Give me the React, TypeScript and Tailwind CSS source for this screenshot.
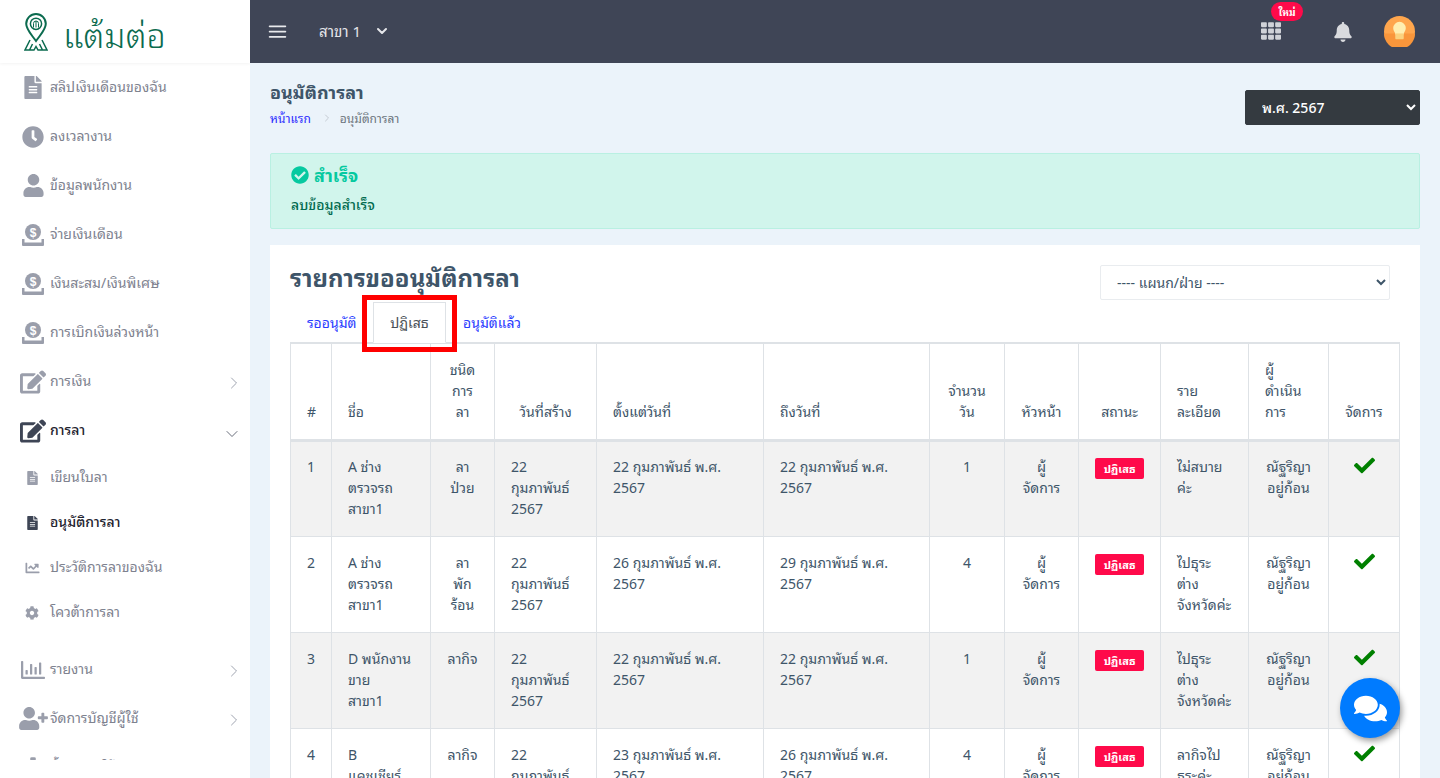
import React from "react";
import { FaFileAlt, FaClock, FaUser, FaEdit, FaUserPlus, FaCheck, FaCheckCircle, FaBell, FaCog, FaChartLine, FaComments, FaTh, FaRegChartBar } from "react-icons/fa";
import { FiChevronRight, FiChevronDown, FiMenu } from "react-icons/fi";

function Money({ className = "" }: { className?: string }) {
  return (
    <svg viewBox="0 0 24 24" className={className} fill="currentColor">
      <path d="M12 1a8 8 0 1 1 0 16a8 8 0 0 1 0-16z" />
      <text x="12" y="13.5" textAnchor="middle" fontSize="12" fontWeight="700" fill="#fff" fontFamily="Liberation Sans, sans-serif">$</text>
      <path d="M1 16h2.5v3.5h17V16H23v6a1 1 0 0 1-1 1H2a1 1 0 0 1-1-1z" />
    </svg>
  );
}

function Logo() {
  return (
    <svg viewBox="0 0 24 38" className="w-[24px] h-[38px]" fill="none" stroke="#0b6b4f" strokeWidth="2">
      <path d="M12 28C7 21 2.200 16.500 2.200 10.800a9.800 9.800 0 0 1 19.600 0C21.800 16.500 17 21 12 28z" />
      <circle cx="12" cy="10.800" r="5.600" strokeWidth="1.500" />
      <path d="M9.500 14.500V10.500a2.500 2.500 0 0 1 5 0v4M12 8v6.500" strokeWidth="1" />
      <path d="M6 27L1 37h9l2-3.500 2 3.500h9L18 27M5.500 37l3-6M18.500 37l-3-6" strokeWidth="1.500" />
    </svg>
  );
}

type Item = { label: string; icon: React.ReactNode; chevron?: "r" | "d"; active?: boolean };
const cls = "text-[#9a9eab]";
const items: Item[] = [
  { label: "สลิปเงินเดือนของฉัน", icon: <FaFileAlt className="w-[18px] h-[23px]" /> },
  { label: "ลงเวลางาน", icon: <FaClock className="w-[22px] h-[22px]" /> },
  { label: "ข้อมูลพนักงาน", icon: <FaUser className="w-[23px] h-[23px]" /> },
  { label: "จ่ายเงินเดือน", icon: <Money className="w-[24px] h-[24px]" /> },
  { label: "เงินสะสม/เงินพิเศษ", icon: <Money className="w-[24px] h-[24px]" /> },
  { label: "การเบิกเงินล่วงหน้า", icon: <Money className="w-[24px] h-[24px]" /> },
  { label: "การเงิน", icon: <FaEdit className="w-[26px] h-[24px]" />, chevron: "r" },
  { label: "การลา", icon: <FaEdit className="w-[26px] h-[24px]" />, chevron: "d", active: true },
];
const subs = [
  { label: "เขียนใบลา", icon: <FaFileAlt className="w-[11px] h-[14px]" /> },
  { label: "อนุมัติการลา", icon: <FaFileAlt className="w-[11px] h-[14px]" />, active: true },
  { label: "ประวัติการลาของฉัน", icon: <FaChartLine className="w-[15px] h-[14px]" /> },
  { label: "โควต้าการลา", icon: <FaCog className="w-[14px] h-[14px]" /> },
];
const items2: Item[] = [
  { label: "รายงาน", icon: <FaRegChartBar className="w-[24px] h-[24px]" />, chevron: "r" },
  { label: "จัดการบัญชีผู้ใช้", icon: <FaUserPlus className="w-[29px] h-[23px]" />, chevron: "r" },
  { label: "ตั้งค่าการใช้งานระบบ", icon: <FaCog className="w-[22px] h-[22px]" />, chevron: "r" },
];

function MenuRow({ it }: { it: Item }) {
  return (
    <div className={`h-[49px] flex items-center ${it.active ? "text-[#3e4555] font-medium" : cls}`}>
      <div className="w-[50px] pl-[18px] flex justify-center shrink-0 pr-[2px]">{it.icon}</div>
      <span className={`text-[14px] flex-1 pb-[4px] ${it.active ? "text-[#1f2430]" : "text-[#7e828f]"}`}>{it.label}</span>
      {it.chevron === "r" && <FiChevronRight strokeWidth={1} className="w-[20px] h-[20px] mr-[6px] mt-[3px] text-[#8b92a0]" />}
      {it.chevron === "d" && <FiChevronDown strokeWidth={1} className="w-[20px] h-[20px] mr-[8px] mt-[6px] text-[#4a5060]" />}
    </div>
  );
}

function Sidebar() {
  return (
    <aside className="w-[250px] shrink-0 bg-white flex flex-col h-[760px] overflow-hidden relative">
      <div className="h-[63px] shrink-0 flex items-center pl-[24px] gap-[15px] shadow-[0_1px_3px_rgba(0,0,0,0.05)] relative z-10">
        <Logo />
        <span className="text-[34px] leading-none text-[#0b6b4f] font-light pt-[2px]">แต้มต่อ</span>
      </div>
      <nav>
        {items.map((it) => <MenuRow key={it.label} it={it} />)}
        {subs.map((s) => (
          <div key={s.label} className={`h-[45px] flex items-center ${s.active ? "text-[#3e4555]" : cls}`}>
            <div className="w-[50px] pl-[14px] flex justify-center shrink-0">{s.icon}</div>
            <span className={`text-[14px] pb-[4px] ${s.active ? "text-[#1f2430] font-medium" : "text-[#7e828f]"}`}>{s.label}</span>
          </div>
        ))}
        <div className="h-[10px]" />
        {items2.map((it) => <MenuRow key={it.label} it={it} />)}
      </nav>
    </aside>
  );
}

type Row = { n: string; name: string[]; type: string[]; created: string[]; from: string[]; to: string[]; days: string; reason: string[] };
const rows: Row[] = [
  { n: "1", name: ["A ช่าง", "ตรวจรถ", "สาขา1"], type: ["ลา", "ป่วย"], created: ["22", "กุมภาพันธ์", "2567"], from: ["22 กุมภาพันธ์ พ.ศ.", "2567"], to: ["22 กุมภาพันธ์ พ.ศ.", "2567"], days: "1", reason: ["ไม่สบาย", "ค่ะ"] },
  { n: "2", name: ["A ช่าง", "ตรวจรถ", "สาขา1"], type: ["ลา", "พัก", "ร้อน"], created: ["22", "กุมภาพันธ์", "2567"], from: ["26 กุมภาพันธ์ พ.ศ.", "2567"], to: ["29 กุมภาพันธ์ พ.ศ.", "2567"], days: "4", reason: ["ไปธุระ", "ต่าง", "จังหวัดค่ะ"] },
  { n: "3", name: ["D พนักงาน", "ขาย", "สาขา1"], type: ["ลากิจ"], created: ["22", "กุมภาพันธ์", "2567"], from: ["22 กุมภาพันธ์ พ.ศ.", "2567"], to: ["22 กุมภาพันธ์ พ.ศ.", "2567"], days: "1", reason: ["ไปธุระ", "ต่าง", "จังหวัดค่ะ"] },
  { n: "4", name: ["B", "แคชเชียร์", "สาขา1"], type: ["ลากิจ"], created: ["22", "กุมภาพันธ์", "2567"], from: ["23 กุมภาพันธ์ พ.ศ.", "2567"], to: ["26 กุมภาพันธ์ พ.ศ.", "2567"], days: "4", reason: ["ลากิจไป", "ธุระค่ะ"] },
];

function Lines({ l }: { l: string[] }) {
  return <>{l.map((x, i) => <div key={i} className="whitespace-nowrap">{x}</div>)}</>;
}

const widths = ["w-[41px]", "w-[99px]", "w-[64px]", "w-[102px]", "w-[167px]", "w-[166px]", "w-[75px]", "w-[74px]", "w-[82px]", "w-[88px]", "w-[80px]", "w-[71px]"];
const headers: { l: string[]; left?: boolean }[] = [
  { l: ["#"] }, { l: ["ชื่อ"], left: true }, { l: ["ชนิด", "การ", "ลา"] }, { l: ["วันที่สร้าง"] },
  { l: ["ตั้งแต่วันที่"], left: true }, { l: ["ถึงวันที่"], left: true }, { l: ["จำนวน", "วัน"] }, { l: ["หัวหน้า"] },
  { l: ["สถานะ"] }, { l: ["ราย", "ละเอียด"], left: true }, { l: ["ผู้", "ดำเนิน", "การ"], left: true }, { l: ["จัดการ"] },
];

function LeaveTable() {
  return (
    <table className="table-fixed border-collapse w-[1109px] text-[14px] leading-[21px] text-[#3e5569]">
      <colgroup>{widths.map((w, i) => <col key={i} className={w} />)}</colgroup>
      <thead>
        <tr className="border-t-2 border-[#dee2e6]">
          {headers.map((h, i) => (
            <th key={i} className={`border border-b-[3px] border-[#dee2e6] px-4 pt-[15px] pb-[17px] align-bottom font-normal ${h.left ? "text-left" : "text-center"}`}>
              <div className="-translate-y-px"><Lines l={h.l} /></div>
            </th>
          ))}
        </tr>
      </thead>
      <tbody>
        {rows.map((r, i) => {
          const td = `border border-[#dee2e6] px-4 pb-4 align-top ${i === 0 ? "pt-[13px]" : "pt-[14px]"}`;
          return (
            <tr key={r.n} className={`h-[96px] ${i % 2 === 0 ? "bg-[#f2f2f2]" : "bg-white"}`}>
              <td className={`${td} text-center`}>{r.n}</td>
              <td className={td}><Lines l={r.name} /></td>
              <td className={`${td} text-center`}><Lines l={r.type} /></td>
              <td className={td}><Lines l={r.created} /></td>
              <td className={td}><Lines l={r.from} /></td>
              <td className={td}><Lines l={r.to} /></td>
              <td className={`${td} text-center`}>{r.days}</td>
              <td className={`${td} text-center`}><Lines l={["ผู้", "จัดการ"]} /></td>
              <td className={`${td} text-center`}>
                <span className="inline-flex items-center justify-center h-[21px] w-[49px] translate-y-px rounded-[2px] bg-[#ff0a4a] text-white text-[11px] font-bold">ปฏิเสธ</span>
              </td>
              <td className={td}><Lines l={r.reason} /></td>
              <td className={`${td} text-center`}><Lines l={["ณัฐริญา", "อยู่ก้อน"]} /></td>
              <td className={`${td} text-center`}><FaCheck className="inline-block w-[21px] h-[21px] text-[#008000] -mt-[6px]" /></td>
            </tr>
          );
        })}
      </tbody>
    </table>
  );
}

function Bulb() {
  return (
    <svg viewBox="0 0 32 32" className="w-[31px] h-[31px]">
      <circle cx="16" cy="16" r="16" fill="#ffa64d" />
      <path d="M0 18h32a16 16 0 0 1-32 0z" fill="#f9963b" />
      <path d="M16 6a6.500 6.500 0 0 1 6.500 6.500c0 3-2 4.500-2.500 7v4h-8v-4c-.5-2.500-2.500-4-2.500-7A6.500 6.500 0 0 1 16 6z" fill="#ffeeb0" />
      <rect x="12" y="18" width="8" height="6" fill="#fbd27e" />
    </svg>
  );
}

export default function App() {
  return (
    <div className="h-screen overflow-hidden flex bg-white font-['Noto_Sans_Thai_Looped','Noto_Sans',sans-serif]">
      <Sidebar />
      <main className="flex-1 min-w-0 bg-[#ebf3fa] flex flex-col relative">
        <header className="h-[63px] shrink-0 bg-[#3f4556] flex items-center pl-[17px] text-white">
          <FiMenu className="w-[21px] h-[21px] text-[#e8e9ec]" />
          <span className="ml-[31px] text-[15px] pb-[3px] text-[#e5e6ea]">สาขา 1</span>
          <FiChevronDown strokeWidth={3} className="ml-[13px] w-[16px] h-[16px] -mt-[2px] text-[#e5e6ea]" />
          <div className="ml-auto relative flex items-center mr-[25px]">
            <FaTh className="w-[20px] h-[20px] text-[#d0d2d8] -mt-[2px]" />
            <span className="absolute -top-[14px] left-[10px] h-[19px] w-[32px] rounded-full bg-[#ff0a4a] text-white text-[10px] font-bold flex items-center justify-center">ใหม่</span>
            <FaBell className="ml-[52px] w-[20px] h-[20px] text-[#d9dade]" />
            <div className="ml-[31px]"><Bulb /></div>
          </div>
        </header>
        <div className="px-5 flex-1 min-h-0">
          <div className="flex justify-between items-start h-[90px] pt-[15px]">
            <div>
              <h1 className="text-[18px] leading-[27px] font-bold text-[#3e5569]">อนุมัติการลา</h1>
              <div className="flex items-center text-[12px] leading-[18px] mt-[4px]">
                <span className="text-[#2a2aff]">หน้าแรก</span>
                <FiChevronRight className="ml-[10px] mr-[7px] w-[12px] h-[12px] text-[#c5cbd3]" />
                <span className="text-[#6c757d]">อนุมัติการลา</span>
              </div>
            </div>
            <select className="w-[175px] h-[35px] mt-[12px] rounded-[2px] bg-[#343a40] text-white text-[14px] font-medium pl-[12px] pb-[3px] outline-none border border-[#343a40]">
              <option>พ.ศ. 2567</option>
            </select>
          </div>
          <div className="h-[76px] rounded-[2px] bg-[#d1f5ec] border border-[#b9f0e2] px-5 pt-[7px]">
            <div className="flex items-center gap-[5px] text-[#06c9a0] text-[18px] leading-[27px] font-bold">
              <FaCheckCircle className="w-[18px] h-[18px]" />
              <span>สำเร็จ</span>
            </div>
            <p className="text-[14px] leading-[21px] mt-[5px] text-[#036b50] font-medium">ลบข้อมูลสำเร็จ</p>
          </div>
          <section className="mt-4 bg-white px-5 pt-5 relative">
            <div className="flex justify-between items-start h-[38px]">
              <h2 className="text-[24px] leading-[30px] -mt-[4px] font-bold text-[#3e5569]">รายการขออนุมัติการลา</h2>
              <select className="w-[290px] h-[35px] mr-[10px] rounded-[2px] bg-white border border-[#e9ecef] text-[#3e5569] text-[14px] pl-[12px] pb-[3px] outline-none">
                <option>---- แผนก/ฝ่าย ----</option>
              </select>
            </div>
            <div className="relative flex items-center h-[39px] text-[14px]">
              <span className="ml-[17px] text-[#2a3cff] w-[66px] pb-[2px]">รออนุมัติ</span>
              <span className="h-[41px] w-[73px] pb-[2px] flex items-center justify-center bg-white border border-[#dee2e6] border-b-white text-[#495057] relative z-10">ปฏิเสธ</span>
              <span className="ml-[17px] text-[#2a3cff] pb-[2px]">อนุมัติแล้ว</span>
              <div className="absolute left-[72px] -top-[8px] w-[95px] h-[57px] border-[5px] border-[#ff0000] z-20" />
            </div>
            <LeaveTable />
          </section>
        </div>
        <button className="absolute left-[1090px] top-[678px] w-[60px] h-[60px] rounded-full bg-[#007bff] text-white flex items-center justify-center shadow-[2px_3px_6px_rgba(0,0,0,0.4)] z-30">
          <FaComments className="w-[33px] h-[33px]" />
        </button>
      </main>
    </div>
  );
}
